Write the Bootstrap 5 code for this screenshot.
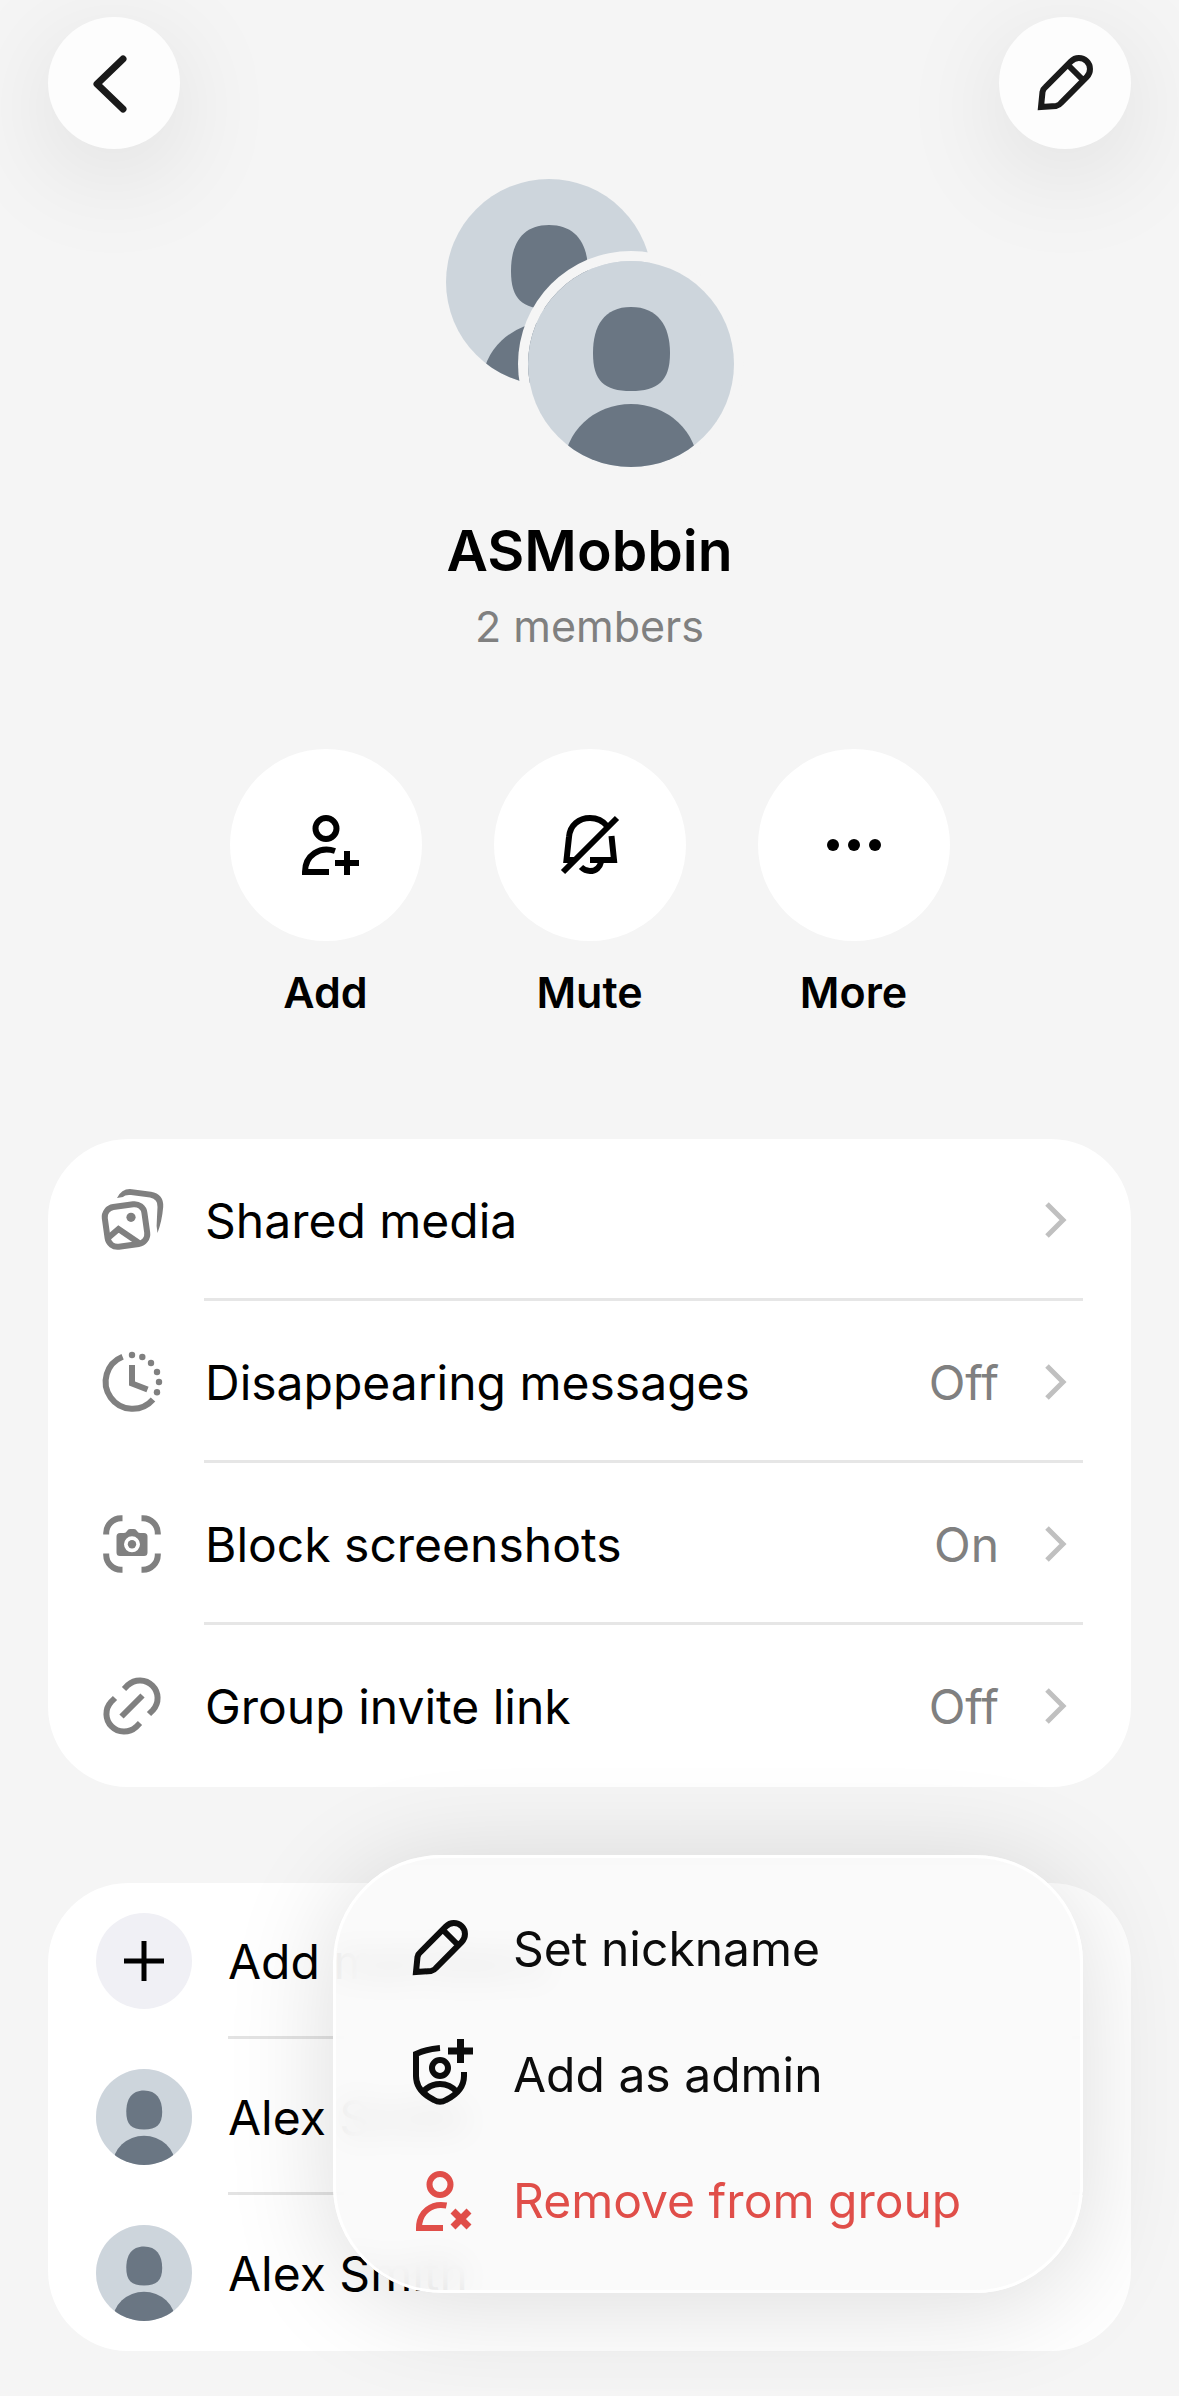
<!DOCTYPE html>
<html lang="en">
<head>
<meta charset="utf-8">
<meta name="viewport" content="width=device-width, initial-scale=1">
<title>ASMobbin</title>
<link href="https://cdn.jsdelivr.net/npm/bootstrap@5.3.0/dist/css/bootstrap.min.css" rel="stylesheet">
<style>
  body { font-family: Inter, "Liberation Sans", sans-serif; background: #f5f5f5; color: #000; font-size: 48px; line-height: 64px; overflow-x: hidden; }
  .page-wrap { padding: 17px 48px 40px; }
  svg { display: block; flex: none; }
  .ico { width: 72px; height: 72px; fill: none; stroke: currentColor; stroke-width: 6; }
  .round-btn { width: 132px; height: 132px; background: #fdfdfd; color: #1a1a1a; box-shadow: 0 24px 108px rgba(0,0,0,.1); }
  .avatar-pair { width: 288px; height: 288px; margin-top: 30px; }
  .avatar-pair > svg { grid-area: 1 / 1; width: 206px; height: 206px; border-radius: 50%; }
  .avatar-front { box-shadow: 0 0 0 10px #f5f5f5; }
  .group-name { font-size: 57px; line-height: 72px; font-weight: 600; margin-top: 48px; }
  .group-count { font-size: 43px; line-height: 56px; color: #808080; margin-top: 11px; }
  .action-row { gap: 72px; margin-top: 95px; }
  .action-btn { width: 192px; gap: 23px; font-size: 43px; line-height: 56px; font-weight: 600; color: #000; }
  .action-disc { width: 192px; height: 192px; background: #fff; }
  .panel { border-radius: 80px; background: #fff; }
  .settings-panel { margin-top: 119px; }
  .setting { gap: 36px; padding: 0 48px; color: #000; }
  .setting .ico { color: #808080; }
  .setting-body { height: 162px; padding: 3px 16px 0 1px; border-bottom: 3px solid #e6e6e6; }
  .setting-body > span { padding-top: 2px; }
  .setting:last-child .setting-body, .member:last-child .member-body { border-color: transparent; }
  .setting-value { color: #808080; margin-right: 44px; }
  .chev { width: 24px; height: 40px; fill: none; stroke: #c0c0c0; stroke-width: 5; }
  .members-wrap { margin-top: 96px; }
  .member { gap: 36px; padding: 0 48px; color: #000; }
  .member-pic { width: 96px; height: 96px; border-radius: 50%; background: #f0f0f5; }
  .member-body { height: 156px; padding-top: 5px; border-bottom: 3px solid #e3e3e3; }
  .popup { top: -28px; right: 48px; width: 750px; padding: 27px 12px 27px; border: 3px solid #fff; border-radius: 108px; background: rgba(250,250,250,.9); -webkit-backdrop-filter: blur(16px); backdrop-filter: blur(16px); box-shadow: 0 12px 108px rgba(0,0,0,.14); }
  .popup-item { gap: 37px; height: 126px; padding: 0 56px; font-size: 48px; line-height: 64px; color: #0c0c0c; }
  .popup-item > span { padding-top: 2px; }
  .popup-danger { color: #e04e49; }
</style>
</head>
<body>
<svg width="0" height="0" class="position-absolute" aria-hidden="true">
  <symbol id="pencil" viewBox="0 0 72 72"><path d="M12 60 13.500 45Q14 42 16.500 40L42 14.300A11 11 0 0 1 57.800 29.800L32 56Q30 58.500 27 59ZM39 18 54 33"/></symbol>
  <symbol id="face" viewBox="0 0 206 206"><path fill="#cdd5dc" d="M0 0h206v206H0z"/><path fill="#6a7683" d="M103 46C130 46 142 65 142 92 142 120 130 130 103 130 76 130 65 120 65 92 65 65 76 46 103 46Z"/><ellipse cx="103" cy="206" rx="67" ry="63" fill="#6a7683"/></symbol>
</svg>
<main class="page-wrap">
  <header class="d-flex justify-content-between">
    <button type="button" class="btn border-0 rounded-circle p-0 d-flex align-items-center justify-content-center round-btn" aria-label="Back">
      <svg class="ico" viewBox="0 0 72 72" stroke-linecap="round" stroke-linejoin="round"><path stroke-width="7" d="M45 12 19 37 45 62"/></svg>
    </button>
    <button type="button" class="btn border-0 rounded-circle p-0 d-flex align-items-center justify-content-center round-btn" aria-label="Edit">
      <svg class="ico"><use href="#pencil"/></svg>
    </button>
  </header>

  <section class="d-flex flex-column align-items-center text-center">
    <div class="d-grid avatar-pair">
      <svg><use href="#face"/></svg>
      <svg class="avatar-front align-self-end ms-auto"><use href="#face"/></svg>
    </div>
    <h1 class="group-name mb-0">ASMobbin</h1>
    <p class="group-count mb-0">2 members</p>
    <div class="d-flex justify-content-center action-row">
      <button type="button" class="btn border-0 p-0 d-flex flex-column align-items-center action-btn">
        <span class="action-disc rounded-circle d-flex align-items-center justify-content-center">
          <svg class="ico" viewBox="0 0 72 72"><circle cx="36" cy="19.500" r="10.500"/><path d="M45 42C30 37 15 46 15 63H39M57 42V66M45 54H69"/></svg>
        </span>Add
      </button>
      <button type="button" class="btn border-0 p-0 d-flex flex-column align-items-center action-btn">
        <span class="action-disc rounded-circle d-flex align-items-center justify-content-center">
          <svg class="ico" viewBox="0 0 72 72"><path d="M20 51H12.500L15 28C16 16 25 9 36 9 43 9 49 12 53 17M36 51H60L57.500 27M27 58Q31 62 36 62C42 62 46 58 47 53M9 63 63 9"/></svg>
        </span>Mute
      </button>
      <button type="button" class="btn border-0 p-0 d-flex flex-column align-items-center action-btn">
        <span class="action-disc rounded-circle d-flex align-items-center justify-content-center">
          <svg class="ico" viewBox="0 0 72 72"><g fill="#000" stroke="none"><circle cx="15" cy="36" r="6"/><circle cx="36" cy="36" r="6"/><circle cx="57" cy="36" r="6"/></g></svg>
        </span>More
      </button>
    </div>
  </section>

  <nav class="panel settings-panel" aria-label="Group settings">
    <a href="#media" class="d-flex align-items-center text-decoration-none setting">
      <svg class="ico" viewBox="0 0 72 72"><rect x="10" y="21.500" width="40" height="40" rx="10" transform="rotate(-8 30 41.500)"/><path fill="currentColor" stroke="none" d="M21 14Q26 4 36 5.200L55 7.700Q68 10 67.200 23 66 37 61.500 49 60 42 61 33L61.500 23Q62 15 54 13.500L35 11Q29 10.500 27 13Z"/><path d="M12 54 22.500 45 43 59"/><circle cx="35" cy="33.300" r="4.600" fill="currentColor" stroke="none"/></svg>
      <span class="setting-body flex-grow-1 d-flex align-items-center"><span class="flex-grow-1">Shared media</span><svg class="chev"><path d="M4 4 20 20 4 36"/></svg></span>
    </a>
    <a href="#timer" class="d-flex align-items-center text-decoration-none setting">
      <svg class="ico" viewBox="0 0 72 72"><path d="M26.600 10.700A27 27 0 1 0 57 53.500M36 19V37.500L51.500 43.500"/><g fill="currentColor" stroke="none"><circle cx="36" cy="9" r="3.200"/><circle cx="46.300" cy="11" r="3.200"/><circle cx="55" cy="17" r="3.200"/><circle cx="61" cy="26" r="3.200"/><circle cx="63" cy="36" r="3.200"/><circle cx="61" cy="46.300" r="3.200"/></g></svg>
      <span class="setting-body flex-grow-1 d-flex align-items-center"><span class="flex-grow-1">Disappearing messages</span><span class="setting-value">Off</span><svg class="chev"><path d="M4 4 20 20 4 36"/></svg></span>
    </a>
    <a href="#screens" class="d-flex align-items-center text-decoration-none setting">
      <svg class="ico" viewBox="0 0 72 72"><path d="M26.500 10.200H25A15 15 0 0 0 10.200 25V26.500M45.500 10.200H47A15 15 0 0 1 61.800 25V26.500M26.500 61.800H25A15 15 0 0 1 10.200 47V45.500M45.500 61.800H47A15 15 0 0 0 61.800 47V45.500"/><path fill="currentColor" stroke="none" fill-rule="evenodd" d="M24 25H28Q30 25 31 23 32 21 34 21H38Q40 21 41 23 42 25 44 25H48Q51.500 25 51.500 28.500V44.500Q51.500 48 48 48H24Q20.500 48 20.500 44.500V28.500Q20.500 25 24 25ZM36 28.300A8 8 0 1 0 36 44.300 8 8 0 1 0 36 28.300Z"/><circle cx="36" cy="36.300" r="4.200" fill="currentColor" stroke="none"/></svg>
      <span class="setting-body flex-grow-1 d-flex align-items-center"><span class="flex-grow-1">Block screenshots</span><span class="setting-value">On</span><svg class="chev"><path d="M4 4 20 20 4 36"/></svg></span>
    </a>
    <a href="#invite" class="d-flex align-items-center text-decoration-none setting">
      <svg class="ico" viewBox="0 0 72 72"><path d="M28 19 32 15A17.700 17.700 0 0 1 57 40L53 44M44 53 40 57A17.700 17.700 0 0 1 15 32L19 28M25.500 46.500 46.500 25.500"/></svg>
      <span class="setting-body flex-grow-1 d-flex align-items-center"><span class="flex-grow-1">Group invite link</span><span class="setting-value">Off</span><svg class="chev"><path d="M4 4 20 20 4 36"/></svg></span>
    </a>
  </nav>

  <section class="position-relative members-wrap">
    <div class="panel">
      <a href="#add" class="d-flex align-items-center text-decoration-none member">
        <svg class="member-pic" viewBox="0 0 96 96"><path fill="none" stroke="#000" stroke-width="5" d="M48 28V68M28 48H68"/></svg>
        <span class="member-body flex-grow-1 d-flex align-items-center">Add members</span>
      </a>
      <a href="#m1" class="d-flex align-items-center text-decoration-none member">
        <svg class="member-pic"><use href="#face"/></svg>
        <span class="member-body flex-grow-1 d-flex align-items-center">Alex Smith</span>
      </a>
      <a href="#m2" class="d-flex align-items-center text-decoration-none member">
        <svg class="member-pic"><use href="#face"/></svg>
        <span class="member-body flex-grow-1 d-flex align-items-center">Alex Smith</span>
      </a>
    </div>
    <div class="position-absolute popup" role="menu">
      <button type="button" role="menuitem" class="btn border-0 w-100 d-flex align-items-center text-start popup-item">
        <svg class="ico"><use href="#pencil"/></svg><span>Set nickname</span>
      </button>
      <button type="button" role="menuitem" class="btn border-0 w-100 d-flex align-items-center text-start popup-item">
        <svg class="ico" viewBox="0 0 72 72"><path d="M36 10Q23 11 12 16V38C12 50 20 57 30 62Q36 65.500 42 62C52 57 60 50 60 38V34M19 54Q26 46 36 46T53 54"/><circle cx="36" cy="30" r="8"/><path stroke-width="7" d="M56.500 1V25M44 13H69"/></svg><span>Add as admin</span>
      </button>
      <button type="button" role="menuitem" class="btn border-0 w-100 d-flex align-items-center text-start popup-item popup-danger">
        <svg class="ico" viewBox="0 0 72 72"><circle cx="36" cy="20.500" r="10.500"/><path d="M42.500 41.500C28 38.500 15 48 15 64H39"/><path stroke-width="7" d="M49 47 65 63M65 47 49 63"/></svg><span>Remove from group</span>
      </button>
    </div>
  </section>
</main>
<script src="https://cdn.jsdelivr.net/npm/bootstrap@5.3.0/dist/js/bootstrap.bundle.min.js"></script>
</body>
</html>
